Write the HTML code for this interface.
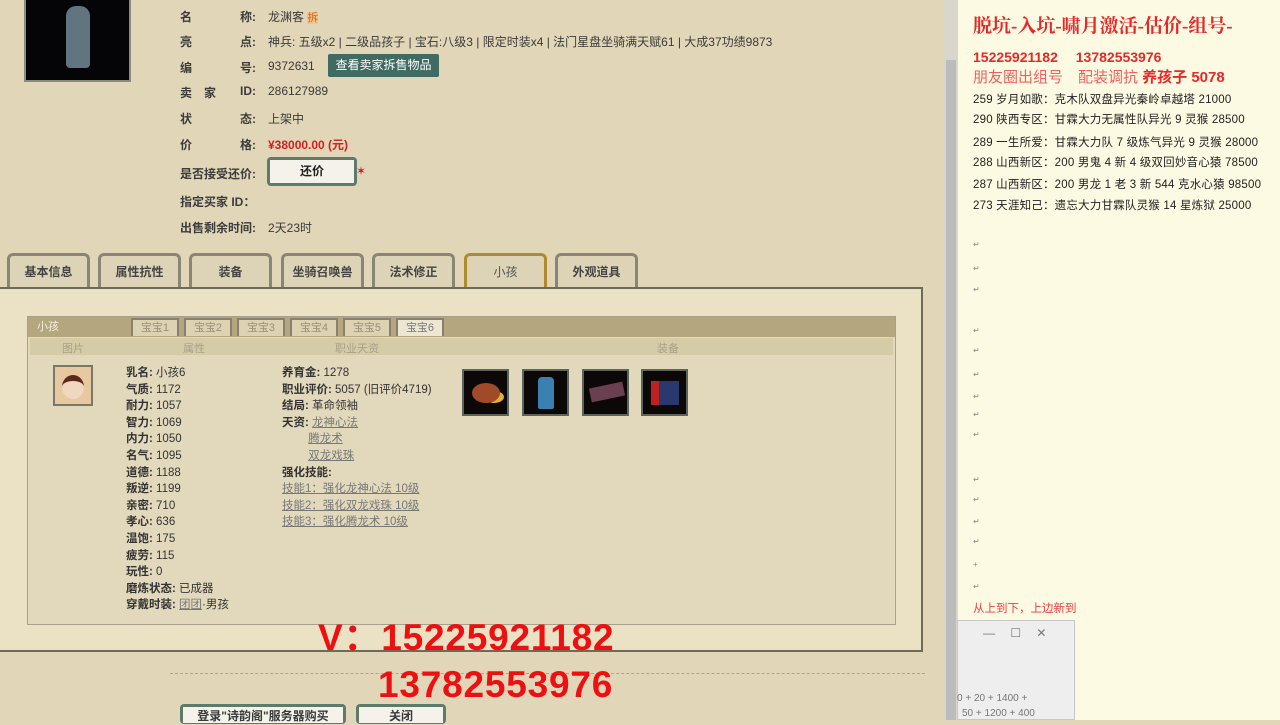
<!DOCTYPE html>
<html><head><meta charset="utf-8"><style>
*{margin:0;padding:0;box-sizing:border-box}
body{width:1280px;height:720px;overflow:hidden;position:relative;background:#e2d6b8;font-family:"Liberation Sans","Noto Sans CJK SC",sans-serif;font-size:12px;color:#3a3a3a}
.a{position:absolute;white-space:nowrap}
.lb{font-weight:bold;color:#3c3c3c}
.tab{position:absolute;top:253px;height:35px;width:83px;border:3px solid #8a8676;border-bottom:none;border-radius:6px 6px 0 0;background:#ddd3b6;text-align:center;line-height:32px;font-size:12px;font-weight:bold;color:#444}
.st{position:absolute;top:318px;height:18px;width:48px;border:2px solid #8a8070;border-bottom:none;background:#ddd2b2;color:#9a9078;text-align:center;line-height:16px;font-size:11px}
.eq{position:absolute;top:369px;width:47px;height:47px;background:#0c0808;border:2px solid #5c6460}
.r{color:#333;font-size:11.5px}
.lk{color:#777;text-decoration:underline}
.rt{position:absolute;left:973px;font-size:11.5px;color:#222;white-space:nowrap;letter-spacing:0.2px}
.ret{position:absolute;left:973px;color:#888;font-size:8px}
</style></head><body>
<div class="a" style="left:24px;top:-4px;width:107px;height:86px;background:#050508;border:2px solid #8a8a80"><div style="position:absolute;left:40px;top:8px;width:24px;height:62px;background:#8aa4b4;border-radius:10px 10px 4px 4px;opacity:.7"></div></div>
<div class="a lb" style="left:180px;top:8px">名</div><div class="a lb" style="left:240px;top:8px">称:</div><div class="a" style="left:268px;top:8px">龙渊客 <span style="background:#f3c58a;color:#e06020;font-size:11px">拆</span></div>
<div class="a lb" style="left:180px;top:33px">亮</div><div class="a lb" style="left:240px;top:33px">点:</div><div class="a" style="left:268px;top:33px">神兵: 五级x2 | 二级品孩子 | 宝石:八级3 | 限定时装x4 | 法门星盘坐骑满天赋61 | 大成37功绩9873</div>
<div class="a lb" style="left:180px;top:59px">编</div><div class="a lb" style="left:240px;top:59px">号:</div><div class="a" style="left:268px;top:59px">9372631</div>
<div class="a" style="left:328px;top:54px;width:111px;height:23px;background:#3f6b60;color:#fff;border-radius:2px;text-align:center;line-height:23px">查看卖家拆售物品</div>
<div class="a lb" style="left:180px;top:84px">卖　家</div><div class="a lb" style="left:240px;top:84px">ID:</div><div class="a" style="left:268px;top:84px">286127989</div>
<div class="a lb" style="left:180px;top:110px">状</div><div class="a lb" style="left:240px;top:110px">态:</div><div class="a" style="left:268px;top:110px">上架中</div>
<div class="a lb" style="left:180px;top:136px">价</div><div class="a lb" style="left:240px;top:136px">格:</div><div class="a" style="left:268px;top:136px;color:#d42020;font-weight:bold">¥38000.00 (元)</div>
<div class="a lb" style="left:180px;top:165px">是否接受还价:</div>
<div class="a" style="left:267px;top:157px;width:90px;height:29px;background:#5e7a6a;border-radius:4px;padding:3px"><div style="background:#f4f2ea;height:23px;text-align:center;line-height:23px;font-weight:bold;color:#222">还价</div></div>
<div class="a" style="left:356px;top:164px;color:#c02030;font-size:12px">✶</div>
<div class="a lb" style="left:180px;top:193px">指定买家 ID：</div>
<div class="a lb" style="left:180px;top:219px">出售剩余时间:</div><div class="a" style="left:268px;top:219px">2天23时</div>
<div class="tab" style="left:7px">基本信息</div>
<div class="tab" style="left:98px">属性抗性</div>
<div class="tab" style="left:189px">装备</div>
<div class="tab" style="left:281px">坐骑召唤兽</div>
<div class="tab" style="left:372px">法术修正</div>
<div class="tab" style="left:464px;border-color:#b08a30;color:#555;font-weight:normal">小孩</div>
<div class="tab" style="left:555px">外观道具</div>
<div class="a" style="left:0;top:287px;width:923px;height:365px;background:#ebe2c6;border:2px solid #6e6a58;border-left:none"></div>
<div class="a" style="left:27px;top:316px;width:869px;height:309px;background:#e2d8bb;border:1px solid #a8a08a"></div>
<div class="a" style="left:28px;top:317px;width:867px;height:20px;background:#b4a67f"></div>
<div class="a" style="left:37px;top:318px;color:#f4eedc;font-size:11px">小孩</div>
<div class="st" style="left:131px">宝宝1</div><div class="st" style="left:184px">宝宝2</div><div class="st" style="left:237px">宝宝3</div><div class="st" style="left:290px">宝宝4</div><div class="st" style="left:343px">宝宝5</div>
<div class="st" style="left:396px;background:#ece6d2;color:#777">宝宝6</div>
<div class="a" style="left:30px;top:338px;width:863px;height:17px;background:#d5cba6"></div>
<div class="a" style="left:62px;top:340px;color:#aaa08a;font-size:11px">图片</div>
<div class="a" style="left:183px;top:340px;color:#aaa08a;font-size:11px">属性</div>
<div class="a" style="left:335px;top:340px;color:#aaa08a;font-size:11px">职业天资</div>
<div class="a" style="left:657px;top:340px;color:#aaa08a;font-size:11px">装备</div>
<div class="a" style="left:53px;top:365px;width:40px;height:41px;background:#e8c8a0;border:2px solid #7a7868"><div style="margin:8px auto;width:22px;height:24px;border-radius:50%;background:#f0d8c0;border-top:6px solid #5a2a1a"></div></div>
<div class="a r" style="left:126px;top:365px;line-height:16.6px"><b>乳名:</b> 小孩6<br><b>气质:</b> 1172<br><b>耐力:</b> 1057<br><b>智力:</b> 1069<br><b>内力:</b> 1050<br><b>名气:</b> 1095<br><b>道德:</b> 1188<br><b>叛逆:</b> 1199<br><b>亲密:</b> 710<br><b>孝心:</b> 636<br><b>温饱:</b> 175<br><b>疲劳:</b> 115<br><b>玩性:</b> 0<br><b>磨炼状态:</b> 已成器<br><b>穿戴时装:</b> <span class="lk">团团</span>·男孩</div>
<div class="a r" style="left:282px;top:365px;line-height:16.6px"><b>养育金:</b> 1278<br><b>职业评价:</b> 5057 (旧评价4719)<br><b>结局:</b> 革命领袖<br><b>天资:</b> <span class="lk">龙神心法</span><br>　　 <span class="lk">腾龙术</span><br>　　 <span class="lk">双龙戏珠</span><br><b>强化技能:</b><br><span class="lk">技能1：强化龙神心法 10级</span><br><span class="lk">技能2：强化双龙戏珠 10级</span><br><span class="lk">技能3：强化腾龙术 10级</span></div>
<div class="eq" style="left:462px"><div style="margin:12px 8px;width:28px;height:20px;border-radius:50%;background:#a04a2a;box-shadow:8px 4px 0 -4px #e0b030"></div></div>
<div class="eq" style="left:522px"><div style="margin:6px 14px;width:16px;height:32px;background:#3a80b0;border-radius:4px 4px 2px 2px"></div></div>
<div class="eq" style="left:582px"><div style="margin:14px 6px;width:34px;height:14px;background:#6a4050;transform:rotate(-12deg)"></div></div>
<div class="eq" style="left:641px"><div style="margin:10px 8px;width:28px;height:24px;background:#2a3870;border-left:8px solid #c02020"></div></div>
<div class="a" style="left:170px;top:673px;width:755px;border-top:1px dashed #b8a478"></div>
<div class="a" style="left:318px;top:607px;color:#ee1010;font-size:37px;font-weight:bold;letter-spacing:0.8px">V：15225921182</div>
<div class="a" style="left:378px;top:664px;color:#ee1010;font-size:37px;font-weight:bold;letter-spacing:0.8px">13782553976</div>
<div class="a" style="left:180px;top:704px;width:166px;height:20px;background:#5e7a6a;border-radius:4px;padding:3px"><div style="background:#f4f2ea;height:16px;text-align:center;font-weight:bold;font-size:12px;line-height:18px">登录"诗韵阁"服务器购买</div></div>
<div class="a" style="left:356px;top:704px;width:90px;height:20px;background:#5e7a6a;border-radius:4px;padding:3px"><div style="background:#f4f2ea;height:16px;text-align:center;font-weight:bold;line-height:18px">关闭</div></div>
<div class="a" style="left:943px;top:0;width:15px;height:720px;background:#d9d6cc"></div>
<div class="a" style="left:946px;top:60px;width:10px;height:660px;background:#bcbcbc"></div>
<div class="a" style="left:958px;top:0;width:322px;height:720px;background:#fcfae2"></div>
<div class="a" style="left:973px;top:11px;color:#e62828;font-size:19px;font-weight:bold;font-family:'Liberation Serif','Noto Serif CJK SC',serif">脱坑-入坑-啸月激活-估价-组号-</div>
<div class="a" style="left:973px;top:47px;color:#e62828;font-size:14px;font-weight:bold">15225921182　 13782553976</div>
<div class="a" style="left:973px;top:66px;color:#f06060;font-size:15px">朋友圈出组号　配装调抗 <span style="color:#e62828;font-weight:bold">养孩子 5078</span></div>
<div class="rt" style="top:91px">259 岁月如歌：克木队双盘异光秦岭卓越塔 21000</div>
<div class="rt" style="top:111px">290 陕西专区：甘霖大力无属性队异光 9 灵猴 28500</div>
<div class="rt" style="top:134px">289 一生所爱：甘霖大力队 7 级炼气异光 9 灵猴 28000</div>
<div class="rt" style="top:154px">288 山西新区：200 男鬼 4 新 4 级双回妙音心猿 78500</div>
<div class="rt" style="top:176px">287 山西新区：200 男龙 1 老 3 新 544 克水心猿 98500</div>
<div class="rt" style="top:197px">273 天涯知己：遗忘大力甘霖队灵猴 14 星炼狱 25000</div>
<div class="ret" style="top:240px">↵</div><div class="ret" style="top:264px">↵</div><div class="ret" style="top:285px">↵</div><div class="ret" style="top:326px">↵</div><div class="ret" style="top:346px">↵</div><div class="ret" style="top:370px">↵</div><div class="ret" style="top:392px">↵</div><div class="ret" style="top:410px">↵</div><div class="ret" style="top:430px">↵</div><div class="ret" style="top:475px">↵</div><div class="ret" style="top:495px">↵</div><div class="ret" style="top:517px">↵</div><div class="ret" style="top:537px">↵</div><div class="ret" style="top:560px">+</div><div class="ret" style="top:582px">↵</div>
<div class="a" style="left:973px;top:600px;color:#e84040;font-size:11.5px">从上到下，上边新到</div>
<div class="a" style="left:957px;top:620px;width:118px;height:100px;background:#eeeeee;border:1px solid #c8c8c8"></div>
<div class="a" style="left:983px;top:624px;color:#777;font-size:12px">—　 ☐　 ✕</div>
<div class="a" style="left:957px;top:693px;color:#777;font-size:10px">0 + 20 + 1400 +</div>
<div class="a" style="left:962px;top:708px;color:#777;font-size:10px">50 + 1200 + 400</div>
</body></html>
